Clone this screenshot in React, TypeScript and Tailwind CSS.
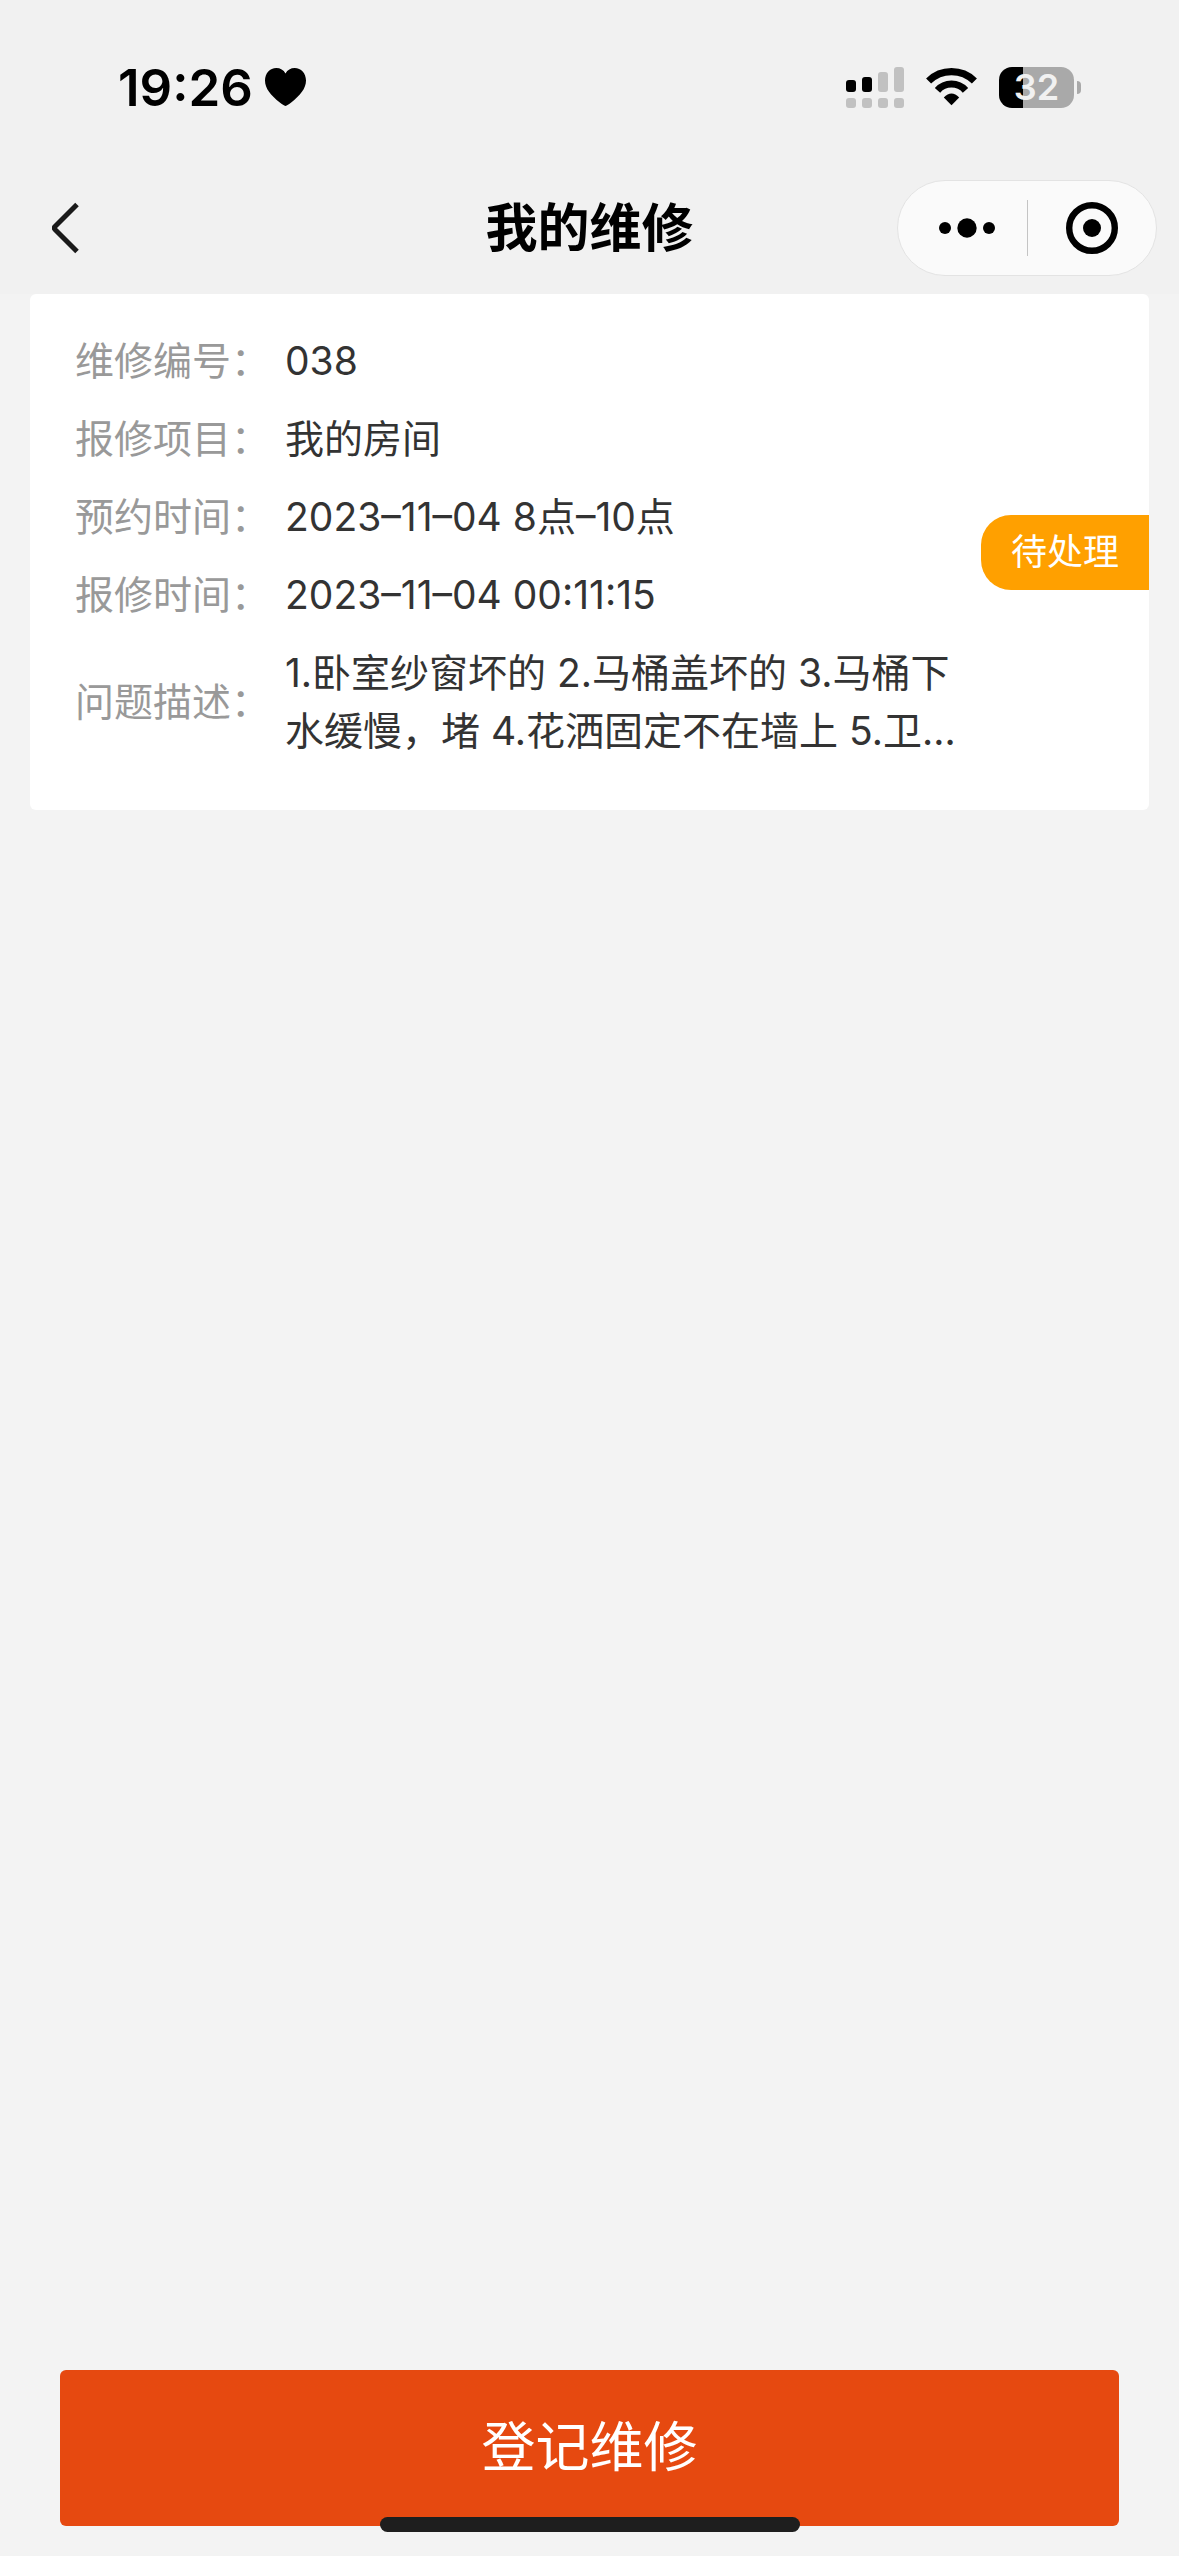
interface RepairField {
  label: string;
  value: string;
}

interface RepairCardProps {
  fields: RepairField[];
  status: string;
}

const fields: RepairField[] = [
  { label: "维修编号", value: "038" },
  { label: "报修项目", value: "我的房间" },
  { label: "预约时间", value: "2023–11–04 8点–10点" },
  { label: "报修时间", value: "2023–11–04 00:11:15" },
  {
    label: "问题描述",
    value: "1.卧室纱窗坏的 2.马桶盖坏的 3.马桶下水缓慢，堵 4.花洒固定不在墙上 5.卫…",
  },
];

function SignalIcon() {
  return (
    <svg width="58" height="41" viewBox="0 0 58 41" aria-hidden="true">
      <rect x="0" y="13" width="10" height="12" rx="3" />
      <rect x="16" y="10" width="10" height="15" rx="3" />
      <g fill="#c1c1c1">
        <rect x="32" y="5" width="10" height="20" rx="3" />
        <rect x="48" y="0" width="10" height="25" rx="3" />
        <rect x="0" y="31" width="10" height="10" rx="3" />
        <rect x="16" y="31" width="10" height="10" rx="3" />
        <rect x="32" y="31" width="10" height="10" rx="3" />
        <rect x="48" y="31" width="10" height="10" rx="3" />
      </g>
    </svg>
  );
}

function WifiIcon() {
  return (
    <svg width="51" height="38" viewBox="0 0 51 38" aria-hidden="true">
      <g fill="none" stroke="#000" strokeWidth="7.2">
        <path d="M2.6 13A32.8 32.8 0 0 1 48.4 13" />
        <path d="M11.5 22.3A18.7 18.7 0 0 1 39.5 22.3" />
      </g>
      <path d="M25.5 37.2L17.8 29.5Q25.5 21.4 33.2 29.5Z" />
    </svg>
  );
}

function Battery() {
  return (
    <div className="flex items-center gap-[3px]">
      <div className="flex h-[41px] w-[75px] items-center justify-center overflow-hidden rounded-[13px] bg-[linear-gradient(to_right,#000_32%,#a9a9a9_32%)] text-[36px] leading-none font-semibold text-[#f1f1f1]">
        32
      </div>
      <div className="h-[13px] w-1 rounded-r-full bg-[#a9a9a9]" />
    </div>
  );
}

function StatusBar() {
  return (
    <div className="flex h-[162px] items-center justify-between pt-3 pr-[98px] pl-[118px]">
      <div className="flex items-center gap-3">
        <span className="text-[51px] leading-none font-semibold">19:26</span>
        <svg width="41" height="38" viewBox="0 0 41 38" aria-hidden="true">
          <path d="M20.5 38C19 37.6 17.4 36.4 14.5 34.2C6 27.7 0 20.6 0 12.6C0 5.2 5 0 11.3 0C15.3 0 18.6 2 20.5 5.4C22.4 2 25.7 0 29.7 0C36 0 41 5.2 41 12.6C41 20.6 35 27.7 26.5 34.2C23.6 36.4 22 37.6 20.5 38Z" />
        </svg>
      </div>
      <div className="flex items-center gap-[22px]">
        <SignalIcon />
        <WifiIcon />
        <Battery />
      </div>
    </div>
  );
}

function NavBar() {
  return (
    <div className="grid h-[132px] grid-cols-[1fr_auto_1fr] items-center px-[22px]">
      <button type="button" aria-label="返回" className="justify-self-start px-[30px] py-3">
        <svg width="29" height="52" viewBox="0 0 29 52" fill="none" stroke="#1a1a1a" strokeWidth="5">
          <path d="M25 2.5L3 24.5Q1.5 26 3 27.5L25 49.5" />
        </svg>
      </button>
      <h1 className="pt-0.5 text-[52px] leading-none font-semibold">我的维修</h1>
      <div className="flex h-24 w-[260px] items-center justify-self-end rounded-full border border-[#e3e3e3] bg-[#fafafa]">
        <button type="button" aria-label="更多" className="flex w-[129px] justify-center pl-2">
          <svg width="56" height="20" viewBox="0 0 56 20">
            <circle cx="6" cy="10" r="6" />
            <circle cx="28" cy="10" r="9.7" />
            <circle cx="50" cy="10" r="6" />
          </svg>
        </button>
        <div className="h-14 w-px bg-[#c4c4c4]" />
        <button type="button" aria-label="关闭" className="flex flex-1 justify-center">
          <svg width="52" height="52" viewBox="0 0 52 52">
            <circle cx="26" cy="26" r="22.8" fill="none" stroke="#000" strokeWidth="6.4" />
            <circle cx="26" cy="26" r="9" />
          </svg>
        </button>
      </div>
    </div>
  );
}

function RepairCard({ fields, status }: RepairCardProps) {
  return (
    <section className="mx-[30px] flex items-center rounded-[6px] bg-white">
      <dl className="flex min-w-0 flex-1 flex-col gap-5 pt-[38px] pr-3 pb-[50px] pl-[45px] text-[39px] leading-[58px]">
        {fields.map((field) => (
          <div key={field.label} className="flex items-center">
            <dt className="w-[210px] shrink-0 text-[#999]">{field.label}：</dt>
            <dd className="line-clamp-2 min-w-0 flex-1 text-[#333]">{field.value}</dd>
          </div>
        ))}
      </dl>
      <span className="shrink-0 rounded-l-[30px] bg-[#ffa000] px-[30px] text-[36px] leading-[75px] text-white">
        {status}
      </span>
    </section>
  );
}

export default function App() {
  return (
    <div className="flex min-h-screen flex-col bg-[#f3f3f3] font-[Inter,'Noto_Sans_CJK_SC',sans-serif] text-black">
      <header className="bg-[#f1f1f1]">
        <StatusBar />
        <NavBar />
      </header>

      <main className="flex-1">
        <RepairCard fields={fields} status="待处理" />
      </main>

      <footer className="relative px-[60px] pb-[30px]">
        <button
          type="button"
          className="h-[156px] w-full rounded-[6px] bg-[#e64910] text-[54px] leading-none text-white"
        >
          登记维修
        </button>
        {/* Home indicator */}
        <div className="absolute bottom-6 left-1/2 h-[15px] w-[420px] -translate-x-1/2 rounded-full bg-[#1e1e1e]" />
      </footer>
    </div>
  );
}
